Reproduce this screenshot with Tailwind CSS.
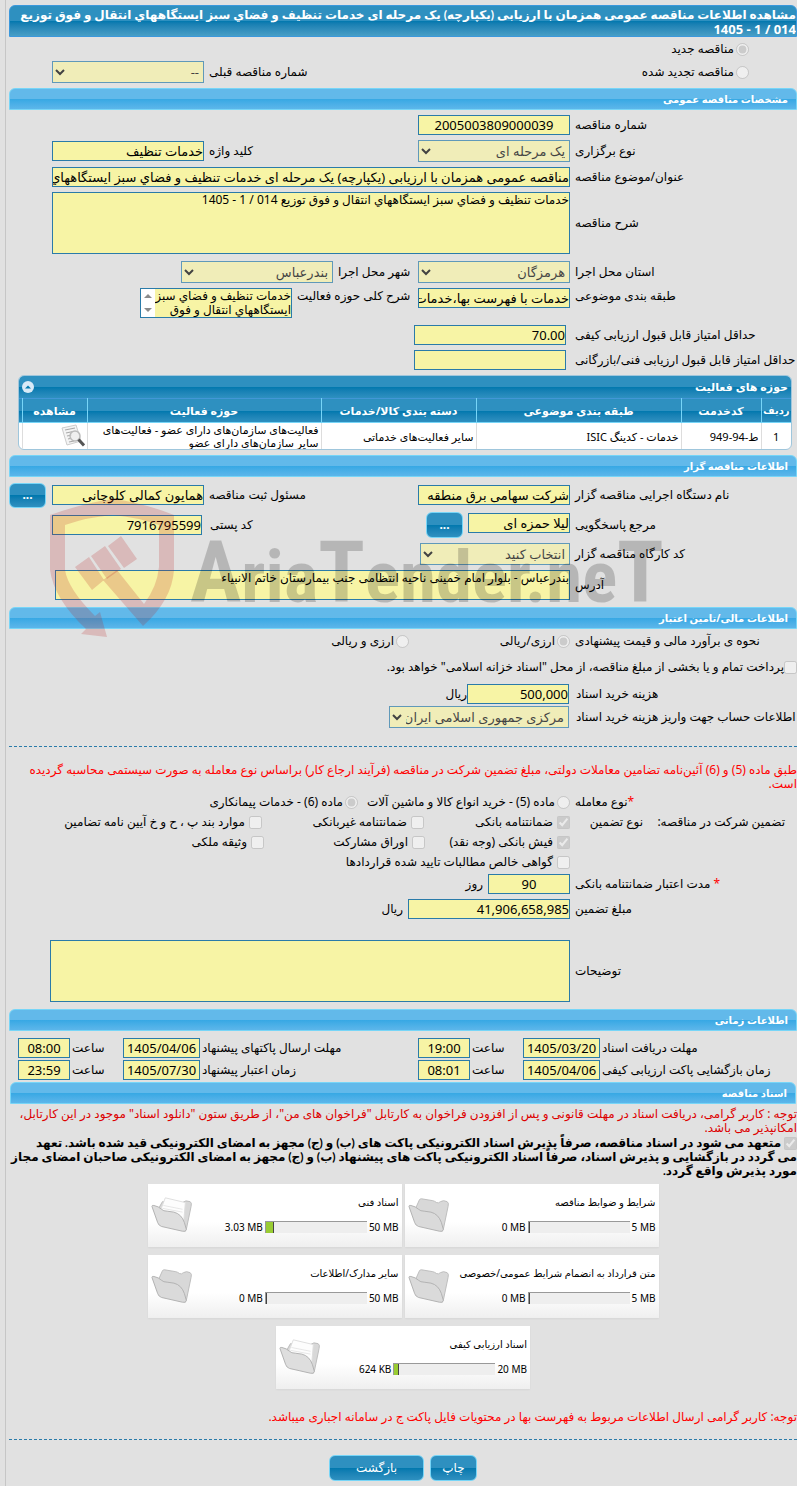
<!DOCTYPE html>
<html lang="fa" dir="rtl">
<head>
    <meta charset="UTF-8">
    <meta name="viewport" content="width=device-width, initial-scale=1.0">
    <title>مشاهده اطلاعات مناقصه عمومی</title>
    <script src="https://cdn.jsdelivr.net/npm/@tailwindcss/browser@4"></script>
</head>
<body class="bg-[#e1e1e1] overflow-x-hidden font-['Noto_Sans','DejaVu_Sans',sans-serif] text-[12px] leading-[14px] text-black">
    <main class="relative ml-[5px] min-h-screen border-l border-[#c6c6c6] pl-[3px] pt-[5px] pb-1">

        <h1 class="h-8 overflow-hidden whitespace-nowrap rounded-t-md border border-[#3b98dc] bg-linear-to-b from-[#2e90c0] from-50% via-[#0078ae] via-50% to-[#479ec6] font-['Lato','DejaVu_Sans',sans-serif] font-bold text-white pt-[2px]">مشاهده اطلاعات مناقصه عمومی همزمان با ارزیابی (یکپارچه) یک مرحله ای خدمات تنظيف و فضاي سبز ايستگاههاي انتقال و فوق توزيع<br><span class="font-['Noto_Sans',sans-serif] text-[13px]">014 / 1 - 1405</span></h1>

        <div class="mt-px flex h-[22px] items-center pr-12">
            <input type="radio" id="newTender" name="tenderType" class="size-[13px]" checked disabled>
            <label for="newTender" class="pr-[2px]">مناقصه جدید</label>
        </div>
        <div class="mt-px flex h-[22px] items-center">
            <div class="flex w-[484px] items-center pr-12">
                <input type="radio" id="renewTender" name="tenderType" class="size-[13px]" disabled>
                <label for="renewTender" class="pr-[2px]">مناقصه تجدید شده</label>
            </div>
            <label for="prevNo" class="w-[104px] text-left whitespace-nowrap">شماره مناقصه قبلی</label>
            <select id="prevNo" class="mr-[5px] h-[22px] w-[152px] border border-[#2a7ba9] bg-[#f7f3a8] text-[13px] text-black disabled:opacity-70" disabled><option>--</option></select>
        </div>

        <h2 class="mt-[5px] h-[22px] rounded-t-md border border-[#77d5f7] bg-linear-to-b from-[#62b9ea] from-50% via-[#36a8e4] via-50% to-[#5cb6ea] pr-2 text-[10px] leading-[20px] font-bold text-white">مشخصات مناقصه عمومی</h2>
        <div class="flex flex-col gap-[5px] pt-[5px]">
            <div class="flex items-center gap-[5px]">
                <label for="tenderNo" class="w-[222px] text-left">شماره مناقصه</label>
                <input id="tenderNo" class="h-5 w-[152px] border border-[#2a7ba9] bg-[#f7f4a5] text-center text-[13px]" value="2005003809000039" readonly>
            </div>
            <div class="flex h-[22px] items-center gap-[5px]">
                <label for="holdType" class="w-[222px] text-left">نوع برگزاری</label>
                <select id="holdType" class="h-[22px] w-[152px] border border-[#2a7ba9] bg-[#f7f3a8] text-[13px] text-black disabled:opacity-70" disabled><option>یک مرحله ای</option></select>
                <label for="keyword" class="w-[204px] text-left">کلید واژه</label>
                <input id="keyword" class="h-5 w-[152px] border border-[#2a7ba9] bg-[#f7f4a5] text-[13px]" value="خدمات تنظیف" readonly>
            </div>
            <div class="flex items-center gap-[5px]">
                <label for="subject" class="w-[222px] text-left">عنوان/موضوع مناقصه</label>
                <input id="subject" class="h-5 w-[518px] border border-[#2a7ba9] bg-[#f7f4a5] text-[13px]" value="مناقصه عمومی همزمان با ارزیابی (یکپارچه) یک مرحله ای خدمات تنظيف و فضاي سبز ايستگاههاي انتقال و فوق توزيع" readonly>
            </div>
            <div class="flex items-center gap-[5px]">
                <label for="description" class="w-[222px] text-left">شرح مناقصه</label>
                <textarea id="description" class="h-[62px] w-[518px] resize-none border border-[#2a7ba9] bg-[#f7f4a5] leading-[14px]" readonly>خدمات تنظيف و فضاي سبز ايستگاههاي انتقال و فوق توزيع 014 / 1 - 1405</textarea>
            </div>
            <div class="mt-[2px] flex items-center gap-[5px]">
                <label for="province" class="w-[222px] text-left">استان محل اجرا</label>
                <select id="province" class="h-[22px] w-[152px] border border-[#2a7ba9] bg-[#f7f3a8] text-[13px] text-black disabled:opacity-70" disabled><option>هرمزگان</option></select>
                <label for="city" class="w-[75px] text-left whitespace-nowrap">شهر محل اجرا</label>
                <select id="city" class="h-[22px] w-[152px] border border-[#2a7ba9] bg-[#f7f3a8] text-[13px] text-black disabled:opacity-70" disabled><option>بندرعباس</option></select>
            </div>
            <div class="flex items-start gap-[5px]">
                <label for="category" class="w-[222px] pt-px text-left">طبقه بندی موضوعی</label>
                <input id="category" class="h-5 w-[152px] border border-[#2a7ba9] bg-[#f7f4a5] text-[13px]" value="خدمات با فهرست بها،خدمات" readonly>
                <label for="scope" class="w-[116px] pt-px text-left whitespace-nowrap">شرح کلی حوزه فعالیت</label>
                <div class="relative h-[30px] w-[152px]">
                    <textarea id="scope" class="block h-[30px] w-full resize-none overflow-hidden border border-[#2a7ba9] bg-[#f7f4a5] leading-[14px] whitespace-pre" readonly>خدمات تنظيف و فضاي سبز
ايستگاههاي انتقال و فوق
توزيع 014 / 1 - 1405</textarea>
                    <span class="absolute inset-y-px left-px w-[14px] bg-white">
                        <svg viewBox="0 0 14 28" class="h-7 w-[14px]" fill="#8b8b8b"><path d="M3 9L7 5L11 9Z"/><path d="M3 19L11 19L7 23Z"/></svg>
                    </span>
                </div>
            </div>
            <div class="mt-[2px] flex items-center gap-[9px]">
                <label for="minQuality" class="w-[222px] text-left whitespace-nowrap">حداقل امتیاز قابل قبول ارزیابی کیفی</label>
                <input id="minQuality" class="h-5 w-[152px] border border-[#2a7ba9] bg-[#f7f4a5] text-[13px]" value="70.00" readonly>
            </div>
            <div class="flex items-center gap-[9px]">
                <label for="minTech" class="w-[222px] text-left whitespace-nowrap">حداقل امتیاز قابل قبول ارزیابی فنی/بازرگانی</label>
                <input id="minTech" class="h-5 w-[152px] border border-[#2a7ba9] bg-[#f7f4a5] text-[13px]" readonly>
            </div>
        </div>

        <div class="mt-[5px] mr-[5px] ml-[9px] overflow-hidden rounded-md border border-[#9fc6dc] bg-white">
            <div class="flex h-[22px] items-center justify-between bg-linear-to-b from-[#2e90c0] from-50% via-[#0078ae] via-50% to-[#2e90c0] px-[3px] text-[11px] font-bold text-white">
                <span>حوزه های فعالیت</span>
                <button class="size-3 rounded-full bg-[#d8eaf7]" aria-label="بستن">
                    <svg viewBox="0 0 12 12" class="size-3"><path d="M3 7.500L6 4.500L9 7.500Z" fill="#0078ae"/></svg>
                </button>
            </div>
            <table class="w-full table-fixed text-[11px] leading-[13px]">
                <thead class="border-t border-b border-t-[#4297d7] border-b-[#77d5f7] bg-linear-to-b from-[#2e90c0] from-50% via-[#0078ae] via-50% to-[#2e90c0] text-white">
                    <tr class="h-6">
                        <th class="w-[30px] border-l border-[#77d5f7] p-0 text-[10px] whitespace-nowrap">ردیف</th>
                        <th class="w-[80px] border-l border-[#77d5f7] p-0">کدخدمت</th>
                        <th class="w-[205px] border-l border-[#77d5f7] p-0">طبقه بندی موضوعی</th>
                        <th class="w-[155px] border-l border-[#77d5f7] p-0">دسته بندی کالا/خدمات</th>
                        <th class="border-l border-[#77d5f7] p-0">حوزه فعالیت</th>
                        <th class="w-[65px] border-l border-[#77d5f7] p-0">مشاهده</th>
                        <th class="w-[3px] p-0"></th>
                    </tr>
                </thead>
                <tbody>
                    <tr class="h-[26px]">
                        <td class="border-l border-[#ddd] p-0 text-center">1</td>
                        <td class="border-l border-[#ddd] py-0 px-[2px]">ط-94-949</td>
                        <td class="border-l border-[#ddd] py-0 px-[2px]">خدمات - کدینگ ISIC</td>
                        <td class="border-l border-[#ddd] py-0 px-[2px]">سایر فعالیت‌های خدماتی</td>
                        <td class="border-l border-[#ddd] py-0 px-[2px]">فعالیت‌های سازمان‌های دارای عضو - فعالیت‌های سایر سازمان‌های دارای عضو</td>
                        <td class="border-l border-[#ddd] p-0 pr-[2px]">
                            <svg viewBox="0 0 24 24" class="size-6">
                                <path d="M1 4L15 1L20 17L6 21Z" fill="#f4f4f4" stroke="#ccc"/>
                                <path d="M4 6L14 4M5 9L12 7.500M6 12L11 11M7 15L11 14M8 18L13 17" stroke="#aaa" stroke-width="1.200"/>
                                <circle cx="14" cy="12" r="5" fill="#eee" fill-opacity=".8" stroke="#bbb" stroke-width="1.500"/>
                                <path d="M17.500 15.500L23 21.500" stroke="#555" stroke-width="3"/>
                            </svg>
                        </td>
                        <td class="p-0"></td>
                    </tr>
                </tbody>
            </table>
        </div>

        <h2 class="mt-[5px] h-[22px] rounded-t-md border border-[#77d5f7] bg-linear-to-b from-[#62b9ea] from-50% via-[#36a8e4] via-50% to-[#5cb6ea] pr-2 text-[10px] leading-[20px] font-bold text-white">اطلاعات مناقصه گزار</h2>
        <div class="flex flex-col pt-[5px]">
            <div class="flex h-[26px] items-center gap-[5px]">
                <label for="orgName" class="w-[222px] text-left">نام دستگاه اجرایی مناقصه گزار</label>
                <input id="orgName" class="h-5 w-[152px] border border-[#2a7ba9] bg-[#f7f4a5] text-[13px]" value="شرکت سهامی برق منطقه" readonly>
                <label for="registrar" class="w-[204px] text-left">مسئول ثبت مناقصه</label>
                <input id="registrar" class="h-5 w-[152px] border border-[#2a7ba9] bg-[#f7f4a5] text-[13px]" value="همایون کمالی کلوچانی" readonly>
                <button class="mr-px h-[25px] w-[37px] rounded-md border border-[#77d5f7] bg-linear-to-b from-[#2e90c0] from-50% via-[#0078ae] via-50% to-[#2e90c0] font-bold text-white">...</button>
            </div>
            <div class="mt-1 flex h-[26px] items-center gap-[5px]">
                <label for="contact" class="w-[222px] text-left">مرجع پاسخگویی</label>
                <input id="contact" class="mb-1 h-5 w-[102px] border border-[#2a7ba9] bg-[#f7f4a5] text-[13px]" value="لیلا حمزه ای" readonly>
                <button class="h-[26px] w-[37px] rounded-md border border-[#77d5f7] bg-linear-to-b from-[#2e90c0] from-50% via-[#0078ae] via-50% to-[#2e90c0] font-bold text-white">...</button>
                <label for="postal" class="w-[211px] text-left">کد پستی</label>
                <input id="postal" class="mr-[3px] h-5 w-[150px] border border-[#2a7ba9] bg-[#f7f4a5] text-[13px]" value="7916795599" readonly>
            </div>
            <div class="mt-[5px] flex h-[22px] items-center gap-[5px]">
                <label for="workshop" class="w-[222px] text-left">کد کارگاه مناقصه گزار</label>
                <select id="workshop" class="h-[22px] w-[150px] border border-[#2a7ba9] bg-[#f7f3a8] text-[13px] text-black disabled:opacity-70" disabled><option>انتخاب کنید</option></select>
            </div>
            <div class="mt-[5px] flex items-center gap-[5px]">
                <label for="address" class="w-[222px] text-left">آدرس</label>
                <textarea id="address" class="h-[30px] w-[515px] resize-none border border-[#2a7ba9] bg-[#f7f4a5] leading-[14px]" readonly>بندرعباس - بلوار امام خمینی ناحیه انتظامی جنب بیمارستان خاتم الانبیاء</textarea>
            </div>
        </div>

        <h2 class="mt-[7px] h-[22px] rounded-t-md border border-[#77d5f7] bg-linear-to-b from-[#62b9ea] from-50% via-[#36a8e4] via-50% to-[#5cb6ea] pr-2 text-[10px] leading-[20px] font-bold text-white">اطلاعات مالی/تامین اعتبار</h2>
        <div class="mt-[2px] flex h-5 items-center">
            <span class="w-[222px] text-left whitespace-nowrap">نحوه ی برآورد مالی و قیمت پیشنهادی</span>
            <div class="mr-[5px] flex w-[161px] items-center">
                <input type="radio" id="currBoth" name="currency" class="size-[13px]" checked disabled>
                <label for="currBoth" class="pr-[2px]">ارزی/ریالی</label>
            </div>
            <input type="radio" id="currAnd" name="currency" class="size-[13px]" disabled>
            <label for="currAnd" class="pr-[2px]">ارزی و ریالی</label>
        </div>
        <div class="mt-[6px] flex h-5 items-center">
            <input type="checkbox" id="treasury" class="size-[13px]" disabled>
            <label for="treasury">پرداخت تمام و یا بخشی از مبلغ مناقصه، از محل "اسناد خزانه اسلامی" خواهد بود.</label>
        </div>
        <div class="mt-[7px] flex items-center">
            <label for="docCost" class="w-[221px] text-left">هزینه خرید اسناد</label>
            <input id="docCost" class="mr-[7px] h-5 w-[102px] border border-[#2a7ba9] bg-[#f7f4a5] text-[13px]" value="500,000" readonly>
            <span>ریال</span>
        </div>
        <div class="mt-[2px] flex items-center">
            <label for="docAccount" class="w-[221px] text-left whitespace-nowrap">اطلاعات حساب جهت واریز هزینه خرید اسناد</label>
            <select id="docAccount" class="mr-[7px] h-[22px] w-[180px] border border-[#2a7ba9] bg-[#f7f3a8] text-[13px] text-black disabled:opacity-70" disabled><option>مرکزی جمهوری اسلامی ایران دولت</option></select>
        </div>
        <hr class="mt-[18px] border-dashed border-[#2a7ba9]">

        <p class="mt-4 text-[#ff0000]">طبق ماده (5) و (6) آئین‌نامه تضامین معاملات دولتی، مبلغ تضمین شرکت در مناقصه (فرآیند ارجاع کار) براساس نوع معامله به صورت سیستمی محاسبه گردیده است.</p>
        <div class="mt-px flex h-5 items-center">
            <span class="w-[222px] text-left"><span class="text-[#ff0000]">*</span>نوع معامله</span>
            <input type="radio" id="deal5" name="dealType" class="mr-[5px] size-[13px]" disabled>
            <label for="deal5" class="w-[199px] pr-[2px] whitespace-nowrap">ماده (5) - خرید انواع کالا و ماشین آلات</label>
            <input type="radio" id="deal6" name="dealType" class="size-[13px]" checked disabled>
            <label for="deal6" class="pr-[2px]">ماده (6) - خدمات پیمانکاری</label>
        </div>
        <div class="flex">
            <span class="mr-3 w-[142px] pt-[3px]">تضمین شرکت در مناقصه:</span>
            <span class="w-[73px] pt-[3px]">نوع تضمین</span>
            <div>
                <div class="flex h-5 items-center">
                    <input type="checkbox" id="g1" class="size-[13px]" checked disabled>
                    <label for="g1" class="w-[133px] pr-1">ضمانتنامه بانکی</label>
                    <input type="checkbox" id="g2" class="size-[13px]" disabled>
                    <label for="g2" class="w-[149px] pr-1">ضمانتنامه غیربانکی</label>
                    <input type="checkbox" id="g3" class="size-[13px]" disabled>
                    <label for="g3" class="pr-1">موارد بند پ ، ح و خ آیین نامه تضامین</label>
                </div>
                <div class="flex h-5 items-center">
                    <input type="checkbox" id="g4" class="size-[13px]" checked disabled>
                    <label for="g4" class="w-[132px] pr-1">فیش بانکی (وجه نقد)</label>
                    <input type="checkbox" id="g5" class="size-[13px]" disabled>
                    <label for="g5" class="w-[148px] pr-1">اوراق مشارکت</label>
                    <input type="checkbox" id="g6" class="size-[13px]" disabled>
                    <label for="g6" class="pr-1">وثیقه ملکی</label>
                </div>
                <div class="flex h-5 items-center">
                    <input type="checkbox" id="g7" class="size-[13px]" disabled>
                    <label for="g7" class="pr-1">گواهی خالص مطالبات تایید شده قراردادها</label>
                </div>
            </div>
        </div>
        <div class="mt-[2px] flex items-center gap-[5px]">
            <label for="validity" class="w-[222px] text-left"><span class="text-[#ff0000]">*</span> مدت اعتبار ضمانتنامه بانکی</label>
            <input id="validity" class="h-5 w-[82px] border border-[#2a7ba9] bg-[#f7f4a5] text-center text-[13px]" value="90" readonly>
            <span>روز</span>
        </div>
        <div class="mt-[5px] flex items-center gap-[5px]">
            <label for="guarantee" class="w-[222px] text-left">مبلغ تضمین</label>
            <input id="guarantee" class="h-5 w-[162px] border border-[#2a7ba9] bg-[#f7f4a5] text-[13px]" value="41,906,658,985" readonly>
            <span>ریال</span>
        </div>
        <div class="mt-[21px] flex items-center gap-[5px]">
            <label for="notes" class="w-[222px] text-left">توضیحات</label>
            <textarea id="notes" class="h-[62px] w-[520px] resize-none border border-[#2a7ba9] bg-[#f7f4a5]" readonly></textarea>
        </div>

        <h2 class="mt-[7px] h-[22px] rounded-t-md border border-[#77d5f7] bg-linear-to-b from-[#62b9ea] from-50% via-[#36a8e4] via-50% to-[#5cb6ea] pr-2 text-[10px] leading-[20px] font-bold text-white">اطلاعات زمانی</h2>
        <div class="mt-[7px] flex items-center">
            <label for="d1" class="w-[195px] text-left">مهلت دریافت اسناد</label>
            <input id="d1" class="mr-[2px] h-5 w-[77px] border border-[#2a7ba9] bg-[#f7f4a5] text-center text-[13px]" value="1405/03/20" readonly>
            <label for="t1" class="w-[51px] text-left">ساعت</label>
            <input id="t1" class="mr-[2px] h-5 w-[52px] border border-[#2a7ba9] bg-[#f7f4a5] text-center text-[13px]" value="19:00" readonly>
            <label for="d2" class="w-[216px] text-left">مهلت ارسال پاکتهای پیشنهاد</label>
            <input id="d2" class="mr-[2px] h-5 w-[77px] border border-[#2a7ba9] bg-[#f7f4a5] text-center text-[13px]" value="1405/04/06" readonly>
            <label for="t2" class="w-[51px] text-left">ساعت</label>
            <input id="t2" class="mr-[2px] h-5 w-[52px] border border-[#2a7ba9] bg-[#f7f4a5] text-center text-[13px]" value="08:00" readonly>
        </div>
        <div class="mt-[2px] flex items-center">
            <label for="d3" class="w-[195px] text-left">زمان بازگشایی پاکت ارزیابی کیفی</label>
            <input id="d3" class="mr-[2px] h-5 w-[77px] border border-[#2a7ba9] bg-[#f7f4a5] text-center text-[13px]" value="1405/04/06" readonly>
            <label for="t3" class="w-[51px] text-left">ساعت</label>
            <input id="t3" class="mr-[2px] h-5 w-[52px] border border-[#2a7ba9] bg-[#f7f4a5] text-center text-[13px]" value="08:01" readonly>
            <label for="d4" class="w-[216px] text-left">زمان اعتبار پیشنهاد</label>
            <input id="d4" class="mr-[2px] h-5 w-[77px] border border-[#2a7ba9] bg-[#f7f4a5] text-center text-[13px]" value="1405/07/30" readonly>
            <label for="t4" class="w-[51px] text-left">ساعت</label>
            <input id="t4" class="mr-[2px] h-5 w-[52px] border border-[#2a7ba9] bg-[#f7f4a5] text-center text-[13px]" value="23:59" readonly>
        </div>

        <h2 class="mx-px mt-[2px] h-[22px] rounded-t-md border border-[#77d5f7] bg-linear-to-b from-[#62b9ea] from-50% via-[#36a8e4] via-50% to-[#5cb6ea] pr-2 text-[10px] leading-[20px] font-bold text-white">اسناد مناقصه</h2>
        <p class="mt-[3px] text-[#dd0000]">توجه : کاربر گرامی، دریافت اسناد در مهلت قانونی و پس از افزودن فراخوان به کارتابل "فراخوان های من"، از طریق ستون "دانلود اسناد" موجود در این کارتابل، امکانپذیر می باشد.</p>
        <div class="mt-px font-['Lato','DejaVu_Sans',sans-serif] font-bold whitespace-nowrap">
            <input type="checkbox" id="commit" class="size-[13px] align-middle" checked disabled>
            <label for="commit">متعهد می شود در اسناد مناقصه، صرفاً پذیرش اسناد الکترونیکی پاکت های (ب) و (ج) مجهز به امضای الکترونیکی قید شده باشد. تعهد<br>می گردد در بازگشایی و پذیرش اسناد، صرفاً اسناد الکترونیکی پاکت های پیشنهاد (ب) و (ج) مجهز به امضای الکترونیکی صاحبان امضای مجاز<br>مورد پذیرش واقع گردد.</label>
        </div>

        <svg class="hidden">
            <symbol id="folder" viewBox="0 0 44 38">
                <path d="M8 12L12 3Q12.500 2 14 2L26 4Q28 4.500 30 6Q32 7 34 5Q37 3 41 5Q43 6 42 10L37 34Q36 37 34 35L10 28Z" fill="#d8d8d8" stroke="#bcbcbc"/>
                <path d="M1 10Q1 8.500 3 9Q8 10 11 13Q13 15 17 15L24 16Q32 18 35 27L37 34Q37 37 33 36L11 31Q8 30 7 27Z" fill="#dadada" stroke="#b0b0b0"/>
            </symbol>
            <symbol id="folderFull" viewBox="0 0 44 38">
                <path d="M8 12L12 5L27 6L33 6Q36 3 41 5Q43 6 42 10L37 34Q36 37 34 35L10 28Z" fill="#d8d8d8" stroke="#bcbcbc"/>
                <path d="M10 14L15 1L36 6L34 29L12 26Z" fill="#fdfdfd" stroke="#ddd"/>
                <path d="M13 9L33 13M12 12L33 16" stroke="#e6e6e6"/>
                <path d="M1 10Q1 8.500 3 9Q8 10 11 13Q13 15 17 15L24 16Q32 18 35 27L37 34Q37 37 33 36L11 31Q8 30 7 27Z" fill="#dedede" stroke="#b0b0b0"/>
            </symbol>
        </svg>
        <div id="cards" class="mx-auto mt-[6px] flex max-w-[520px] flex-wrap justify-center gap-x-[3px] gap-y-2"></div>

        <p class="mt-[21px] text-[#ff0000]">توجه: کاربر گرامی ارسال اطلاعات مربوط به فهرست بها در محتویات فایل پاکت ج در سامانه اجباری میباشد.</p>
        <hr class="mt-[15px] border-dashed border-[#2a7ba9]">
        <div class="mt-[15px] flex justify-center gap-[6px]">
            <button class="h-[26px] w-[47px] rounded-md border border-[#77d5f7] bg-linear-to-b from-[#2e90c0] from-50% via-[#0078ae] via-50% to-[#2e90c0] text-white">چاپ</button>
            <button class="h-[26px] w-[95px] rounded-md border border-[#77d5f7] bg-linear-to-b from-[#2e90c0] from-50% via-[#0078ae] via-50% to-[#2e90c0] text-white">بازگشت</button>
        </div>

        <!-- watermark -->
        <svg class="pointer-events-none absolute top-[495px] left-[40px] h-[150px] w-[620px]" viewBox="0 0 620 150" direction="ltr">
            <g fill="#b81c1c" fill-opacity=".2">
                <path d="M4 20Q38 8 67 4Q98 8 128 20V75Q126 105 97 131L57 85L71 75L98 109Q111 92 113 72V30Q90 22 67 20Q42 22 19 30V75Q22 94 49 121L54 117L61 142L35 139L40 134Q8 104 4 75Z"/>
                <path d="M29 72L43 62L58 85L46 95ZM45 61L59 51L75 74L61 84ZM62 51L75 41L91 64L78 73Z"/>
            </g>
            <text x="144" y="107" font-size="73" font-weight="bold" font-family="'Roboto Condensed','Liberation Sans Narrow',Roboto,sans-serif" fill="#000" fill-opacity=".19"><tspan font-size="86">A</tspan>ria<tspan font-size="86">T</tspan>ender.ne<tspan font-size="86">T</tspan></text>
        </svg>
    </main>

    <script>
    const docs = [
        { title: 'شرایط و ضوابط مناقصه', max: '5 MB', used: '0 MB', fill: 0 },
        { title: 'اسناد فنی', max: '50 MB', used: '3.03 MB', fill: 8 },
        { title: 'متن قرارداد به انضمام شرایط عمومی/خصوصی', max: '5 MB', used: '0 MB', fill: 0 },
        { title: 'سایر مدارک/اطلاعات', max: '50 MB', used: '0 MB', fill: 0 },
        { title: 'اسناد ارزیابی کیفی', max: '20 MB', used: '624 KB', fill: 5 },
    ];
    document.getElementById('cards').innerHTML = docs.map(d => `
        <div class="flex h-[63px] w-[254px] justify-between bg-linear-to-b from-white from-60% to-[#efefef] text-[10px] leading-[14px] whitespace-nowrap shadow-xs">
            <div class="pt-[11px] pr-[3px]">
                <div>${d.title}</div>
                <div class="mt-[11px] flex items-center justify-end gap-[2px]" dir="ltr">
                    <span>${d.used}</span>
                    <div class="h-3 w-[102px] border-t border-l border-[#999] bg-[#eee]"><div class="h-full border-r border-[#444] bg-[#9c3]" style="width: ${d.fill}px"></div></div>
                    <span>${d.max}</span>
                </div>
            </div>
            <svg class="mt-3 ml-[3px] h-[38px] w-[42px] shrink-0"><use href="#${d.fill ? 'folderFull' : 'folder'}"/></svg>
        </div>`).join('');
    </script>
</body>
</html>
